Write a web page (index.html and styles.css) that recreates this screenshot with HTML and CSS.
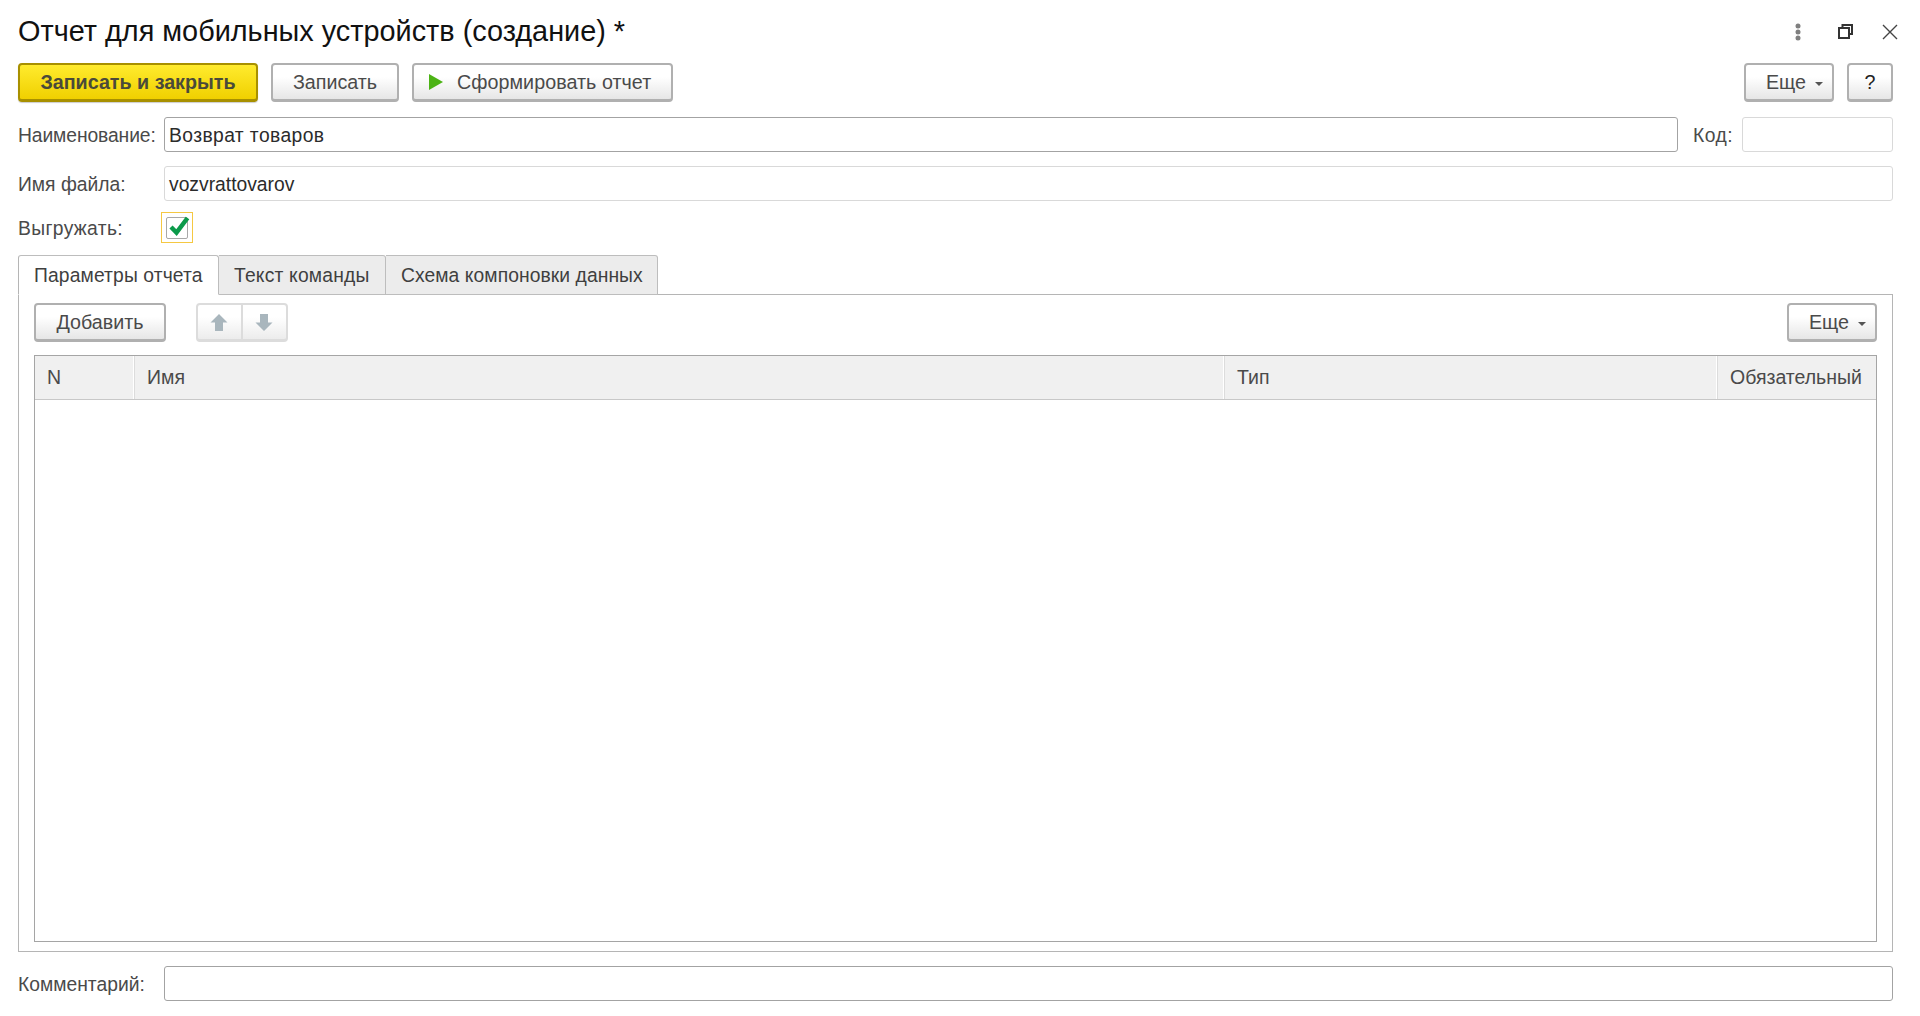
FILE: index.html
```html
<!DOCTYPE html>
<html lang="ru">
<head>
<meta charset="utf-8">
<title>Отчет для мобильных устройств (создание) *</title>
<link rel="stylesheet" href="styles.css">
</head>
<body>
<div class="page">
  <header class="titlebar">
    <h1 class="title">Отчет для мобильных устройств (создание) *</h1>
    <div class="window-icons">
      <svg class="icon-dots" width="10" height="18" viewBox="0 0 10 18"><circle cx="5" cy="3" r="2.5"/><circle cx="5" cy="9" r="2.5"/><circle cx="5" cy="15" r="2.5"/></svg>
      <svg class="icon-restore" width="15" height="15" viewBox="0 0 15 15"><path d="M4.5 3.5V1h9.5v9h-3"/><path d="M1 4h10v10H1z"/></svg>
      <svg class="icon-close" width="16" height="16" viewBox="0 0 16 16"><path d="M1 1l14 14M15 1L1 15"/></svg>
    </div>
  </header>

  <div class="toolbar">
    <button class="btn btn-primary btn-save-close">Записать и закрыть</button>
    <button class="btn btn-save">Записать</button>
    <button class="btn btn-run"><svg class="icon-play" width="14" height="16" viewBox="0 0 14 16"><path d="M0 0l14 8L0 16z"/></svg>Сформировать отчет</button>
    <div class="spacer"></div>
    <button class="btn btn-more">Еще<span class="caret"></span></button>
    <button class="btn btn-help">?</button>
  </div>

  <div class="form-row row-name">
    <label class="label label-name">Наименование:</label>
    <div class="input input-dark input-name grow">Возврат товаров</div>
    <label class="label label-code">Код:</label>
    <div class="input input-code"></div>
  </div>

  <div class="form-row row-file">
    <label class="label">Имя файла:</label>
    <div class="input grow">vozvrattovarov</div>
  </div>

  <div class="form-row row-check">
    <label class="label label-check">Выгружать:</label>
    <div class="check-focus">
      <div class="check-box">
        <svg class="icon-check" width="24" height="24" viewBox="0 0 24 24"><path d="M5 14l5.500 5.500L21.500 5"/></svg>
      </div>
    </div>
  </div>

  <nav class="tabs">
    <div class="tab tab-active">Параметры отчета</div>
    <div class="tab">Текст команды</div>
    <div class="tab">Схема компоновки данных</div>
  </nav>

  <section class="panel">
    <div class="panel-toolbar">
      <button class="btn btn-add">Добавить</button>
      <div class="btn-group">
        <span class="group-btn"><svg width="18" height="19" viewBox="0 0 18 19"><path d="M9 1l8.500 8.500H13V18H5V9.500H.5z"/></svg></span>
        <span class="group-btn"><svg width="18" height="19" viewBox="0 0 18 19"><path d="M9 18L.5 9.500H5V1h8v8.500h4.500z"/></svg></span>
      </div>
      <div class="spacer"></div>
      <button class="btn btn-more">Еще<span class="caret"></span></button>
    </div>
    <div class="table">
      <div class="table-head">
        <div class="th">N</div>
        <div class="th">Имя</div>
        <div class="th">Тип</div>
        <div class="th">Обязательный</div>
      </div>
    </div>
  </section>

  <div class="form-row row-comment">
    <label class="label">Комментарий:</label>
    <div class="input input-dark grow"></div>
  </div>
</div>
</body>
</html>
```

FILE: styles.css
```css
* { box-sizing: border-box; }
html, body { margin: 0; height: 100%; background: #fff; }
body { font-family: "Liberation Sans", Arial, sans-serif; font-size: 19.300px; color: #4a4a4a; overflow: hidden; }
.page { height: 1016px; padding: 0 27px 15px 18px; display: flex; flex-direction: column; }

.titlebar { height: 63px; flex: none; display: flex; align-items: center; justify-content: space-between; }
.title { margin: 0; font-size: 28.850px; font-weight: 400; color: #111; white-space: nowrap; }
.window-icons { display: flex; align-items: center; margin-right: -5px; }
.icon-dots { fill: #7f7f7f; margin-right: 35px; }
.icon-restore { fill: none; stroke: #333; stroke-width: 2; margin-right: 29px; }
.icon-close { fill: none; stroke: #444; stroke-width: 1.400; }

.toolbar { height: 39px; flex: none; display: flex; }
.spacer { flex: 1; }
.btn { height: 39px; padding: 0; font: inherit; font-size: 19.700px; color: #4a4a4a; border: 2px solid #b0b0b0; border-bottom-width: 3px; border-radius: 4px; background: linear-gradient(#ffffff 35%, #e6e6e6); display: flex; align-items: center; justify-content: center; white-space: nowrap; }
.btn-primary { border-color: #a89000; border-bottom-color: #a89000; background: linear-gradient(#ffeb2e, #f0d000); font-weight: 700; color: #4a4a3a; box-shadow: 0 1px 1px #ccc; }
.btn-save-close { width: 240px; margin-right: 13px; }
.btn-save { width: 128px; margin-right: 13px; }
.btn-run { width: 261px; justify-content: flex-start; padding-left: 15px; letter-spacing: 0.05px; }
.icon-play { fill: #4cb315; margin-right: 14px; }
.btn-more { width: 90px; justify-content: flex-end; padding-right: 9px; }
.caret { width: 0; height: 0; margin-left: 9px; margin-top: 3px; border: 4px solid transparent; border-top-color: #555; border-bottom-width: 0; }
.toolbar .btn-more { margin-right: 13px; }
.btn-help { width: 46px; color: #222; }

.form-row { display: flex; flex: none; align-items: center; }
.label { width: 146px; flex: none; white-space: nowrap; padding-top: 3px; }
.grow { flex: 1; }
.input { height: 35px; border: 1px solid #d9d9d9; border-radius: 3px; padding: 0 4px; line-height: 35px; color: #2b2b2b; background: #fff; }
.input-dark { border-color: #a3a3a3; }
.input-name { letter-spacing: 0.4px; }
.row-name { margin-top: 15px; }
.row-file { margin-top: 14px; }
.row-check { margin-top: 11px; }
.row-comment { margin-top: 14px; }
.label-name { letter-spacing: -0.1px; }
.label-code { width: 64px; padding-left: 15px; letter-spacing: 0.5px; }
.input-code { width: 151px; }
.label-check { width: 143px; letter-spacing: 0.35px; }

.check-focus { width: 32px; height: 31px; border: 1px solid #f5c842; padding: 4px; }
.check-box { width: 22px; height: 22px; border: 1px solid #a8a8a8; border-radius: 2px; position: relative; }
.icon-check { position: absolute; left: -1px; top: -5px; fill: none; stroke: #0b9a4a; stroke-width: 4.500; }

.tabs { display: flex; flex: none; height: 39px; margin-top: 12px; position: relative; z-index: 1; }
.tab { height: 40px; padding: 0 15px; line-height: 39px; letter-spacing: 0.12px; background: #ececec; border: 1px solid #bdbdbd; border-left: 0; border-radius: 0 3px 0 0; white-space: nowrap; color: #3f3f3f; }
.tab-active { width: 201px; background: #fff; border-left: 1px solid #b5b5b5; border-bottom-color: #fff; border-radius: 3px 3px 0 0; }
.tab:nth-child(2) { width: 167px; letter-spacing: 0.2px; }
.tab:nth-child(3) { width: 272px; letter-spacing: 0.07px; }

.panel { flex: 1; border: 1px solid #b5b5b5; padding: 8px 15px 9px 15px; display: flex; flex-direction: column; min-height: 0; }
.panel-toolbar { display: flex; flex: none; height: 39px; }
.btn-add { width: 132px; margin-right: 30px; }
.btn-group { width: 92px; height: 39px; display: flex; border-radius: 4px; border: 2px solid #dcdcdc; border-bottom-width: 3px; background: linear-gradient(#ffffff 35%, #ececec); }
.group-btn { flex: 1; display: flex; align-items: center; justify-content: center; fill: #a9b6bd; padding-right: 1px; }
.group-btn + .group-btn { border-left: 2px solid #dcdcdc; }

.table { flex: 1; margin-top: 13px; border: 1px solid #a5a5a5; min-height: 0; }
.table-head { height: 44px; display: grid; grid-template-columns: 99px 1090px 493px 1fr; font-size: 19.500px; background: #f0f0f0; border-bottom: 1px solid #c8c8c8; }
.th { padding-left: 13px; line-height: 42px; border-right: 1px solid #fff; box-shadow: 1px 0 0 #dcdcdc; white-space: nowrap; }
.th:first-child { padding-left: 12px; }
.th:last-child { border-right: 0; box-shadow: none; }
```
